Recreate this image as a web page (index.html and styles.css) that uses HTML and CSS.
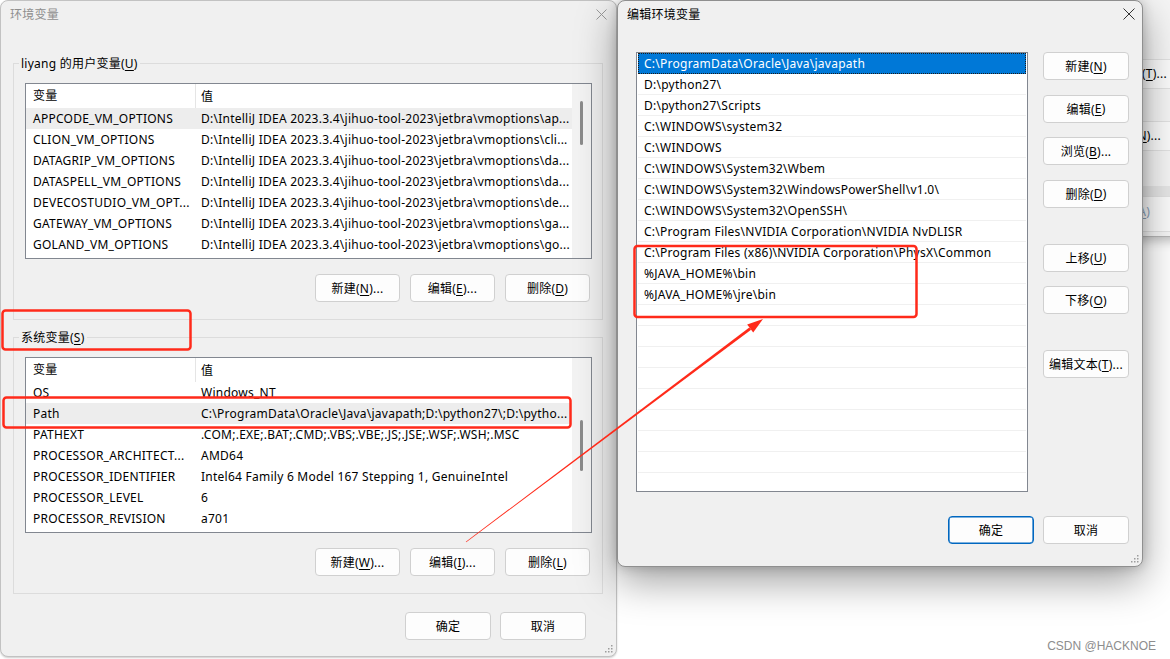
FILE: index.html
```html
<!DOCTYPE html>
<html lang="zh-CN">
<head>
<meta charset="utf-8">
<title>环境变量</title>
<link rel="stylesheet" href="styles.css">
</head>
<body>
<div class="desktop">

  <!-- window behind (system properties) -->
  <div class="win win-sys">
    <div class="sys-btn sys-btn-1">设置(<u>T</u>)...</div>
    <div class="sys-btn sys-btn-2">环境变量(<u>N</u>)...</div>
    <div class="sys-band"></div>
    <div class="sys-btn sys-btn-3">应用(<u>A</u>)</div>
  </div>

  <!-- 环境变量 -->
  <div class="win win-env">
    <div class="titlebar">
      <span class="title title-inactive">环境变量</span>
      <span class="close close-inactive">
        <svg width="11" height="11" viewBox="0 0 11 11"><path d="M0.5 0.5 L10.5 10.5 M10.5 0.5 L0.5 10.5" fill="none" stroke="currentColor" stroke-width="1"/></svg>
      </span>
    </div>
    <div class="env-body">
      <div class="group">
        <div class="group-label">liyang 的用户变量(<u>U</u>)</div>
        <div class="listbox">
          <div class="lv">
            <div class="lv-head"><div class="cell1 head1">变量</div><div class="cell2">值</div></div>
            <div class="lv-row sel-grey"><div class="cell1">APPCODE_VM_OPTIONS</div><div class="cell2">D:\IntelliJ IDEA 2023.3.4\jihuo-tool-2023\jetbra\vmoptions\ap...</div></div>
            <div class="lv-row"><div class="cell1">CLION_VM_OPTIONS</div><div class="cell2">D:\IntelliJ IDEA 2023.3.4\jihuo-tool-2023\jetbra\vmoptions\cli...</div></div>
            <div class="lv-row"><div class="cell1">DATAGRIP_VM_OPTIONS</div><div class="cell2">D:\IntelliJ IDEA 2023.3.4\jihuo-tool-2023\jetbra\vmoptions\da...</div></div>
            <div class="lv-row"><div class="cell1">DATASPELL_VM_OPTIONS</div><div class="cell2">D:\IntelliJ IDEA 2023.3.4\jihuo-tool-2023\jetbra\vmoptions\da...</div></div>
            <div class="lv-row"><div class="cell1">DEVECOSTUDIO_VM_OPT...</div><div class="cell2">D:\IntelliJ IDEA 2023.3.4\jihuo-tool-2023\jetbra\vmoptions\de...</div></div>
            <div class="lv-row"><div class="cell1">GATEWAY_VM_OPTIONS</div><div class="cell2">D:\IntelliJ IDEA 2023.3.4\jihuo-tool-2023\jetbra\vmoptions\ga...</div></div>
            <div class="lv-row"><div class="cell1">GOLAND_VM_OPTIONS</div><div class="cell2">D:\IntelliJ IDEA 2023.3.4\jihuo-tool-2023\jetbra\vmoptions\go...</div></div>
          </div>
          <div class="sb"><div class="thumb thumb-user"></div></div>
        </div>
        <div class="btn-row">
          <div class="btn">新建(<u>N</u>)...</div>
          <div class="btn">编辑(<u>E</u>)...</div>
          <div class="btn">删除(<u>D</u>)</div>
        </div>
      </div>

      <div class="group">
        <div class="group-label">系统变量(<u>S</u>)</div>
        <div class="listbox">
          <div class="lv">
            <div class="lv-head"><div class="cell1 head1">变量</div><div class="cell2">值</div></div>
            <div class="lv-row"><div class="cell1">OS</div><div class="cell2">Windows_NT</div></div>
            <div class="lv-row sel-grey"><div class="cell1">Path</div><div class="cell2">C:\ProgramData\Oracle\Java\javapath;D:\python27\;D:\pytho...</div></div>
            <div class="lv-row"><div class="cell1">PATHEXT</div><div class="cell2">.COM;.EXE;.BAT;.CMD;.VBS;.VBE;.JS;.JSE;.WSF;.WSH;.MSC</div></div>
            <div class="lv-row"><div class="cell1">PROCESSOR_ARCHITECT...</div><div class="cell2">AMD64</div></div>
            <div class="lv-row"><div class="cell1">PROCESSOR_IDENTIFIER</div><div class="cell2">Intel64 Family 6 Model 167 Stepping 1, GenuineIntel</div></div>
            <div class="lv-row"><div class="cell1">PROCESSOR_LEVEL</div><div class="cell2">6</div></div>
            <div class="lv-row"><div class="cell1">PROCESSOR_REVISION</div><div class="cell2">a701</div></div>
          </div>
          <div class="sb"><div class="thumb thumb-sys"></div></div>
        </div>
        <div class="btn-row">
          <div class="btn">新建(<u>W</u>)...</div>
          <div class="btn">编辑(<u>I</u>)...</div>
          <div class="btn">删除(<u>L</u>)</div>
        </div>
      </div>

      <div class="dlg-foot env-foot">
        <div class="btn btn-foot">确定</div>
        <div class="btn btn-foot">取消</div>
      </div>
    </div>
    <svg class="grip" width="9" height="9" viewBox="0 0 9 9"><g fill="#9c9c9c"><rect x="7" y="1" width="1.5" height="1.5"/><rect x="4" y="4" width="1.5" height="1.5"/><rect x="7" y="4" width="1.5" height="1.5"/><rect x="1" y="7" width="1.5" height="1.5"/><rect x="4" y="7" width="1.5" height="1.5"/><rect x="7" y="7" width="1.5" height="1.5"/></g></svg>
  </div>

  <!-- 编辑环境变量 -->
  <div class="win win-edit">
    <div class="titlebar">
      <span class="title">编辑环境变量</span>
      <span class="close close-active">
        <svg width="12" height="12" viewBox="0 0 12 12"><path d="M0.5 0.5 L11.5 11.5 M11.5 0.5 L0.5 11.5" fill="none" stroke="currentColor" stroke-width="1"/></svg>
      </span>
    </div>
    <div class="edit-body">
      <div class="elist">
        <div class="erow esel">C:\ProgramData\Oracle\Java\javapath</div>
        <div class="erow">D:\python27\</div>
        <div class="erow">D:\python27\Scripts</div>
        <div class="erow">C:\WINDOWS\system32</div>
        <div class="erow">C:\WINDOWS</div>
        <div class="erow">C:\WINDOWS\System32\Wbem</div>
        <div class="erow">C:\WINDOWS\System32\WindowsPowerShell\v1.0\</div>
        <div class="erow">C:\WINDOWS\System32\OpenSSH\</div>
        <div class="erow">C:\Program Files\NVIDIA Corporation\NVIDIA NvDLISR</div>
        <div class="erow">C:\Program Files (x86)\NVIDIA Corporation\PhysX\Common</div>
        <div class="erow">%JAVA_HOME%\bin</div>
        <div class="erow">%JAVA_HOME%\jre\bin</div>
        <div class="erow"></div>
        <div class="erow"></div>
        <div class="erow"></div>
        <div class="erow"></div>
        <div class="erow"></div>
        <div class="erow"></div>
        <div class="erow"></div>
        <div class="erow"></div>
      </div>
      <div class="btn-col">
        <div class="btn">新建(<u>N</u>)</div>
        <div class="btn">编辑(<u>E</u>)</div>
        <div class="btn">浏览(<u>B</u>)...</div>
        <div class="btn">删除(<u>D</u>)</div>
        <div class="btn btn-sep">上移(<u>U</u>)</div>
        <div class="btn">下移(<u>O</u>)</div>
        <div class="btn btn-sep">编辑文本(<u>T</u>)...</div>
      </div>
    </div>
    <div class="dlg-foot edit-foot">
      <div class="btn btn-foot btn-default">确定</div>
      <div class="btn btn-foot">取消</div>
    </div>
    <svg class="grip" width="9" height="9" viewBox="0 0 9 9"><g fill="#9c9c9c"><rect x="7" y="1" width="1.5" height="1.5"/><rect x="4" y="4" width="1.5" height="1.5"/><rect x="7" y="4" width="1.5" height="1.5"/><rect x="1" y="7" width="1.5" height="1.5"/><rect x="4" y="7" width="1.5" height="1.5"/><rect x="7" y="7" width="1.5" height="1.5"/></g></svg>
  </div>

  <!-- red annotations -->
  <svg class="annot" width="1170" height="659" viewBox="0 0 1170 659">
    <g fill="none" stroke="#ff2a1a" stroke-width="2.5">
      <rect x="2.5" y="310.5" width="188" height="39" rx="3"/>
      <rect x="3.5" y="397.5" width="567" height="30" rx="3"/>
      <rect x="634.5" y="246" width="282" height="71" rx="3"/>
    </g>
    <polygon fill="#ff2a1a" points="465.8,541.8 466.2,542.2 751.1,329.8 749.3,327.4"/>
    <polygon fill="#ff2a1a" points="763,319 753.2,332.6 747.2,324.6"/>
  </svg>

  <div class="watermark">CSDN @HACKNOE</div>
</div>
</body>
</html>
```

FILE: styles.css
```css
* { box-sizing: border-box; }

html, body {
  margin: 0;
  padding: 0;
}

body {
  width: 1170px;
  height: 659px;
  overflow: hidden;
  background: #ffffff;
  font-family: "Noto Sans", "Noto Sans CJK SC", sans-serif;
  font-size: 12px;
  letter-spacing: 0.25px;
  color: #000;
}

u { text-decoration: underline; text-underline-offset: 2px; }

.desktop {
  position: relative;
  width: 1170px;
  height: 659px;
}

.win {
  position: absolute;
  background: #f0f0f0;
}

/* ---------- window behind ---------- */
.win-sys {
  left: 1060px;
  top: -1px;
  width: 140px;
  height: 238px;
  z-index: 1;
  background: #f5f5f5;
  border-bottom: 1px solid #b5b5b5;
  box-shadow: 0 4px 10px rgba(0,0,0,.25);
  display: flex;
  flex-direction: column;
}

.sys-btn {
  white-space: nowrap;
  background: #fbfbfb;
  border-top: 1px solid #e2e2e2;
  border-bottom: 1px solid #e2e2e2;
  text-align: right;
  padding-right: 33px;
  line-height: 28px;
  height: 30px;
}

.sys-btn-1 { margin-top: 60px; }
.sys-btn-2 { margin-top: 32px; padding-right: 39px; }
.sys-band { margin-top: 35px; height: 10px; background: #e6e6e6; }
.sys-btn-3 { margin-top: 0; color: #8aa3bd; text-align: left; padding-left: 50px; height: 36px; line-height: 30px; }

/* ---------- common window parts ---------- */
.titlebar {
  height: 26px;
  flex: none;
  display: flex;
  align-items: center;
  padding-left: 9px;
}

.title-inactive { color: #8e8e8e; }

.close {
  margin-left: auto;
  display: flex;
  align-items: center;
  justify-content: center;
  height: 26px;
}

.close-inactive { width: 30px; color: #9a9a9a; }
.close-active { width: 26px; color: #333; }

.grip {
  position: absolute;
  right: 3px;
  bottom: 3px;
}

.btn {
  width: 86px;
  height: 28px;
  flex: none;
  border: 1px solid #d0d0d0;
  border-radius: 4px;
  background: #fdfdfd;
  display: flex;
  align-items: center;
  justify-content: center;
  white-space: nowrap;
}

.dlg-foot {
  display: flex;
  justify-content: flex-end;
  gap: 9px;
}

/* ---------- 环境变量 ---------- */
.win-env {
  left: 0;
  top: 0;
  width: 617px;
  height: 657px;
  z-index: 2;
  border: 1px solid #c2c2c2;
  border-radius: 8px;
  box-shadow: 0 1px 2px rgba(0,0,0,.2);
  display: flex;
  flex-direction: column;
}

.env-body {
  display: flex;
  flex-direction: column;
  padding: 0 13px 0 12px;
}

.group {
  margin-top: 36px;
  border: 1px solid #dcdcdc;
  padding: 0 10px 17px 11px;
  display: flex;
  flex-direction: column;
}

.group + .group { margin-top: 17px; }

.group-label {
  align-self: flex-start;
  margin: -8px 0 0 -6px;
  padding: 0 2px;
  line-height: 16px;
  background: #f0f0f0;
}

.listbox {
  margin-top: 11px;
  height: 176px;
  border: 1px solid #828790;
  background: #fff;
  display: flex;
  overflow: hidden;
}

.lv {
  flex: 1;
  min-width: 0;
  display: flex;
  flex-direction: column;
}

.lv-head {
  height: 24px;
  flex: none;
  display: flex;
  align-items: center;
}

.lv-row {
  height: 21px;
  flex: none;
  display: flex;
  align-items: center;
}

.cell1 {
  width: 170px;
  flex: none;
  padding-left: 7px;
  white-space: nowrap;
  overflow: hidden;
}

.cell2 {
  flex: 1;
  min-width: 0;
  padding-left: 5px;
  white-space: nowrap;
  overflow: hidden;
}

.head1 {
  border-right: 1px solid #e5e5e5;
  height: 24px;
  line-height: 24px;
}

.sel-grey { background: #ededed; }

.sb {
  width: 19px;
  flex: none;
  background: #f3f3f3;
  display: flex;
  justify-content: center;
}

.thumb {
  width: 3px;
  background: #8b8b8b;
  border-radius: 2px;
}

.thumb-user { margin-top: 17px; height: 44px; }
.thumb-sys { margin-top: 62px; height: 51px; }

.btn-row {
  display: flex;
  justify-content: flex-end;
  gap: 10px;
  margin-top: 15px;
  margin-right: 2px;
}

.btn-row .btn { width: 85px; }

.env-foot {
  margin-top: 18px;
  padding-right: 17px;
}

/* ---------- 编辑环境变量 ---------- */
.win-edit {
  left: 617px;
  top: 0;
  width: 526px;
  height: 567px;
  z-index: 3;
  border: 1px solid #8f8f8f;
  border-radius: 8px;
  box-shadow: 0 14px 40px rgba(0,0,0,.38), 0 0 12px rgba(0,0,0,.2);
  display: flex;
  flex-direction: column;
}

.edit-body {
  display: flex;
  padding: 25px 13px 0 18px;
}

.elist {
  width: 392px;
  height: 440px;
  flex: none;
  border: 1px solid #828790;
  background: #fff;
  padding: 0 1px;
  overflow: hidden;
}

.erow {
  height: 21px;
  line-height: 21px;
  border-bottom: 1px solid #f0f0f0;
  padding-left: 6px;
  white-space: nowrap;
  overflow: hidden;
}

.esel {
  background: #0078d7;
  color: #fff;
  border-bottom-color: #0078d7;
  outline: 1px dotted #1b1b1b;
  outline-offset: -1px;
}

.btn-col {
  margin-left: 15px;
  display: flex;
  flex-direction: column;
  gap: 14.5px;
}

.btn-sep { margin-top: 21.5px; }

.edit-foot {
  margin-top: 24px;
  padding-right: 13px;
}

.btn-default {
  border-color: #0067c0;
  box-shadow: inset 0 0 0 0.6px #0067c0;
}

/* ---------- annotations ---------- */
.annot {
  position: absolute;
  left: 0;
  top: 0;
  z-index: 10;
  pointer-events: none;
}

.watermark {
  position: absolute;
  right: 14px;
  bottom: 6px;
  z-index: 4;
  font-family: "Liberation Sans", Arial, sans-serif;
  font-size: 12px;
  color: #8d8d8d;
  letter-spacing: 0;
}
```
